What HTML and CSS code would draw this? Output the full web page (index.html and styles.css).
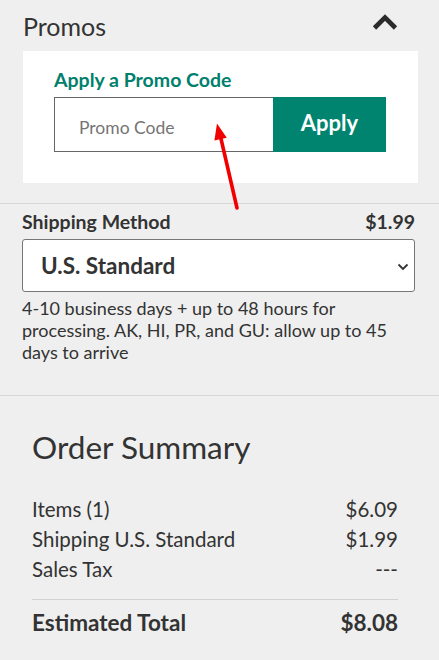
FILE: index.html
```html
<!DOCTYPE html>
<html lang="en">
<head>
<meta charset="utf-8">
<title>Cart summary</title>
<link rel="stylesheet" href="styles.css">
</head>
<body>
<div class="page">
  <section class="promos">
    <div class="promos-head">
      <h2 class="promos-title">Promos</h2>
      <svg class="chev-up" width="26" height="17" viewBox="0 0 26 17" aria-hidden="true">
        <polyline points="2.5,15 13,4.5 23.5,15" fill="none" stroke="#2b2b2b" stroke-width="4.6"/>
      </svg>
    </div>
    <div class="promo-card">
      <label class="promo-label" for="promo">Apply a Promo Code</label>
      <div class="promo-form">
        <input class="promo-input" id="promo" type="text" placeholder="Promo Code">
        <button class="promo-btn" type="button">Apply</button>
      </div>
    </div>
  </section>

  <section class="shipping">
    <div class="ship-head">
      <span>Shipping Method</span>
      <span>$1.99</span>
    </div>
    <div class="ship-select">
      <span>U.S. Standard</span>
      <svg class="chev-down" width="12" height="8" viewBox="0 0 12 8" aria-hidden="true">
        <polyline points="1.5,1.5 6,6 10.5,1.5" fill="none" stroke="#333" stroke-width="1.8"/>
      </svg>
    </div>
    <p class="ship-desc">4-10 business days + up to 48 hours for processing. AK, HI, PR, and GU: allow up to 45 days to arrive</p>
  </section>

  <section class="summary">
    <h2 class="summary-title">Order Summary</h2>
    <div class="summary-rows">
      <div class="row"><span>Items (1)</span><span>$6.09</span></div>
      <div class="row"><span>Shipping U.S. Standard</span><span>$1.99</span></div>
      <div class="row"><span>Sales Tax</span><span>---</span></div>
    </div>
    <div class="row total"><span>Estimated Total</span><span>$8.08</span></div>
  </section>

  <svg class="annot-arrow" width="40" height="95" viewBox="0 0 40 95" aria-hidden="true">
    <line x1="32" y1="90" x2="15.6" y2="19" stroke="#f20000" stroke-width="3.6" stroke-linecap="round"/>
    <polygon points="12,5.5 21.8,19.8 9.4,22.6" fill="#f20000"/>
  </svg>
</div>
</body>
</html>
```

FILE: styles.css
```css
* { box-sizing: border-box; }

html, body {
  margin: 0;
  padding: 0;
  background: #efefef;
}

body {
  font-family: "Segoe UI", Lato, "Open Sans", sans-serif;
  color: #333;
}

.page {
  position: relative;
  width: 439px;
  min-height: 660px;
}

/* Promos */
.promos {
  padding: 0 21px 20px 23px;
}

.promos-head {
  display: flex;
  justify-content: space-between;
  align-items: flex-start;
  padding-top: 11px;
}

.promos-title {
  margin: 0;
  font-size: 25px;
  line-height: 30px;
  font-weight: 400;
  color: #333;
}

.chev-up {
  margin-top: 2px;
  margin-right: 20px;
}

.promo-card {
  margin-top: 10px;
  background: #fff;
  padding: 18px 32px 31px 31px;
}

.promo-label {
  display: block;
  font-size: 19.5px;
  line-height: 22px;
  font-weight: 700;
  color: #00806d;
}

.promo-form {
  display: flex;
  margin-top: 6px;
  height: 55px;
}

.promo-input {
  width: 219px;
  height: 55px;
  border: 1px solid #666;
  border-right: none;
  padding: 5px 0 0 24px;
  font-family: inherit;
  font-size: 17.5px;
  color: #333;
  background: #fff;
  outline: none;
  border-radius: 0;
}

.promo-input::placeholder {
  color: #757575;
}

.promo-btn {
  width: 113px;
  height: 55px;
  border: none;
  border-radius: 0;
  background: #00846f;
  color: #fff;
  font-family: inherit;
  font-size: 22px;
  font-weight: 700;
  padding: 0 0 4px;
}

/* Shipping */
.shipping {
  border-top: 1px solid #d7d7d7;
  padding: 8px 24px 32px 22px;
}

.ship-head {
  display: flex;
  justify-content: space-between;
  font-size: 19.5px;
  line-height: 20px;
  font-weight: 700;
  color: #333;
}

.ship-select {
  margin-top: 7px;
  height: 53px;
  background: #fff;
  border: 1px solid #777;
  border-radius: 3px;
  display: flex;
  align-items: center;
  justify-content: space-between;
  padding: 0 5px 0 18px;
  font-size: 22.5px;
  font-weight: 700;
  color: #333;
}

.chev-down {
  margin-top: 2px;
}

.ship-desc {
  margin: 5px 0 0;
  font-size: 18px;
  line-height: 22px;
  color: #333;
}

/* Summary */
.summary {
  border-top: 1px solid #d7d7d7;
  padding: 31px 41px 20px 32px;
}

.summary-title {
  margin: 0;
  font-size: 31.5px;
  line-height: 40px;
  font-weight: 400;
  color: #333;
}

.summary-rows {
  margin-top: 27px;
  padding-bottom: 15px;
  border-bottom: 1px solid #d2d2d2;
}

.row {
  display: flex;
  justify-content: space-between;
  font-size: 20.5px;
  line-height: 30px;
}

.row.total {
  margin-top: 8px;
  font-size: 22.5px;
  font-weight: 700;
}

/* Annotation overlay */
.annot-arrow {
  position: absolute;
  left: 205px;
  top: 118px;
}
```
